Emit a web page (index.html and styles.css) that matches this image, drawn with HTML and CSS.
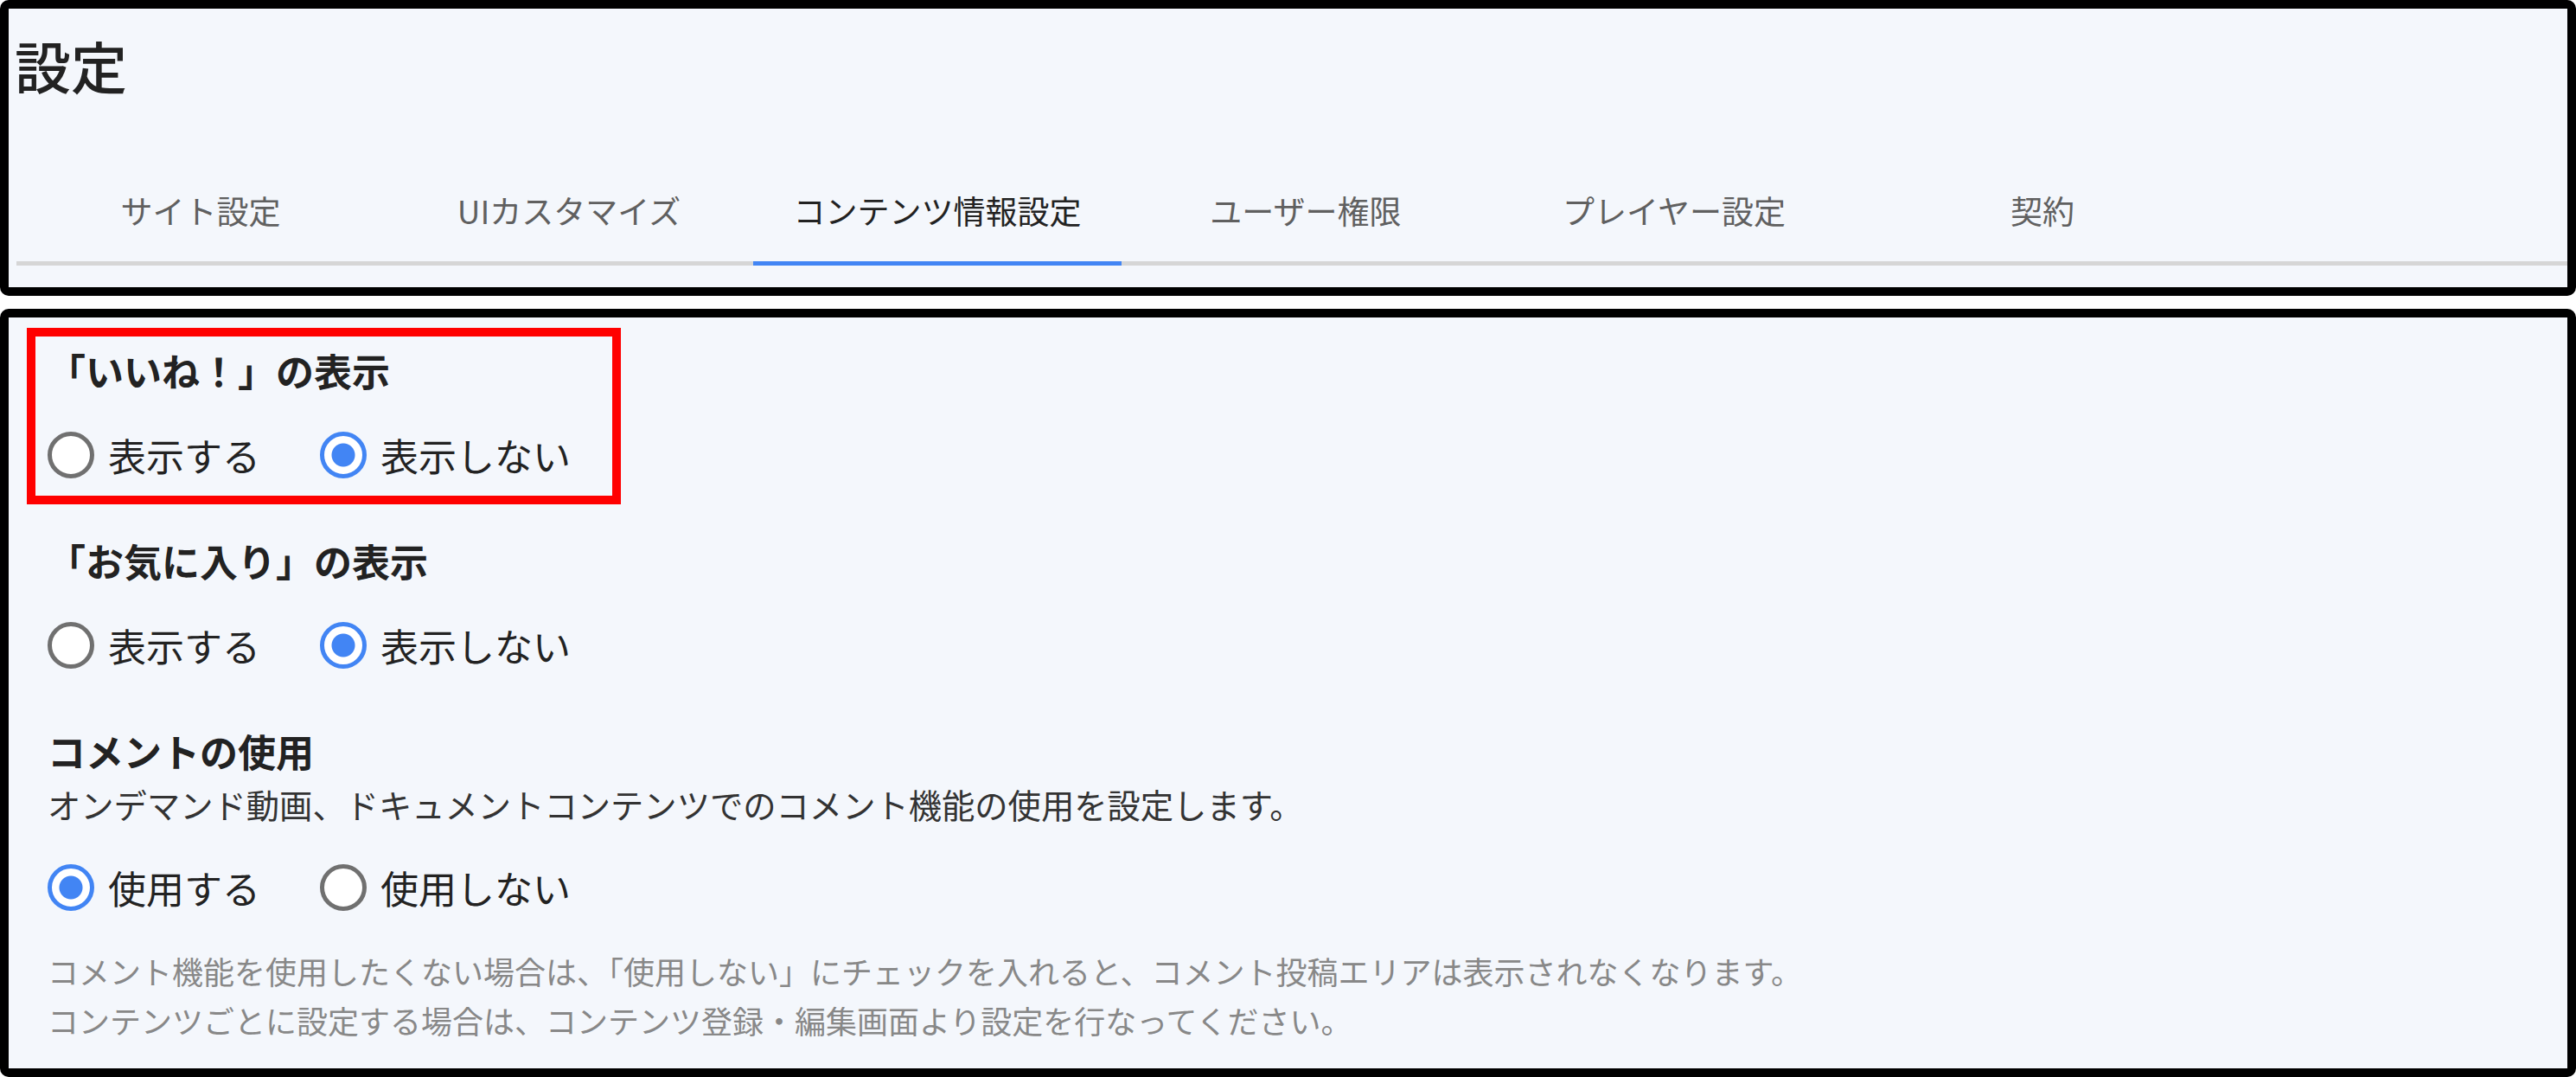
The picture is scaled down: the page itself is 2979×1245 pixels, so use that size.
FILE: index.html
```html
<!DOCTYPE html>
<html lang="ja">
<head>
    <meta charset="UTF-8">
    <meta name="viewport" content="width=device-width, initial-scale=1.0">
    <title>設定</title>
    <link rel="stylesheet" href="styles.css">
</head>
<body>
    <header class="panel page-head">
        <h1 class="page-title">設定</h1>
        <nav class="tabs">
            <a class="tab">サイト設定</a>
            <a class="tab">UIカスタマイズ</a>
            <a class="tab is-active">コンテンツ情報設定</a>
            <a class="tab">ユーザー権限</a>
            <a class="tab">プレイヤー設定</a>
            <a class="tab">契約</a>
        </nav>
    </header>

    <main class="panel settings">
        <!-- marked in red in the original capture -->
        <section class="setting is-marked">
            <h2 class="setting-title">「いいね！」の表示</h2>
            <div class="choices">
                <label class="choice"><input type="radio" name="like"> <span>表示する</span></label>
                <label class="choice"><input type="radio" name="like" checked> <span>表示しない</span></label>
            </div>
        </section>

        <section class="setting">
            <h2 class="setting-title">「お気に入り」の表示</h2>
            <div class="choices">
                <label class="choice"><input type="radio" name="favorite"> <span>表示する</span></label>
                <label class="choice"><input type="radio" name="favorite" checked> <span>表示しない</span></label>
            </div>
        </section>

        <section class="setting">
            <h2 class="setting-title">コメントの使用</h2>
            <p class="setting-desc">オンデマンド動画、ドキュメントコンテンツでのコメント機能の使用を設定します。</p>
            <div class="choices">
                <label class="choice"><input type="radio" name="comment" checked> <span>使用する</span></label>
                <label class="choice"><input type="radio" name="comment"> <span>使用しない</span></label>
            </div>
            <p class="setting-note first">コメント機能を使用したくない場合は、「使用しない」にチェックを入れると、コメント投稿エリアは表示されなくなります。</p>
            <p class="setting-note">コンテンツごとに設定する場合は、コンテンツ登録・編集画面より設定を行なってください。</p>
        </section>
    </main>
</body>
</html>
```

FILE: styles.css
```css
* {
    margin: 0;
    padding: 0;
    box-sizing: border-box;
    font-family: "Noto Sans CJK JP", "Noto Sans", sans-serif;
}

body {
    background: #fff;
    color: #222;
}

.panel {
    background: #f4f7fc;
    border: 10px solid #000;
    border-radius: 10px;
}

/* header: title + tabs */
.page-head {
    padding: 0 0 25px 9px;
}

.page-title {
    font-size: 65px;
    font-weight: 500;
    line-height: 94px;
    margin: 18px 0 0 -2px;
}

.tabs {
    display: flex;
    margin-top: 66px;
    border-bottom: 5px solid #d6d6d6;
}

.tab {
    width: 426px;
    padding-bottom: 4px;
    margin-bottom: -5px;
    border-bottom: 5px solid transparent;
    text-align: center;
    font-size: 37px;
    line-height: 110px;
    color: #606060;
    cursor: pointer;
}

.tab.is-active {
    color: #222;
    border-bottom-color: #4285f4;
}

/* settings list */
.settings {
    margin-top: 15px;
    padding: 12px 0 0 21px;
}

.setting {
    width: fit-content;
    border: 10px solid transparent;
    padding: 9px 48px 17px 14px;
}

.setting + .setting {
    margin-top: 16px;
}

.setting.is-marked {
    border-color: #ff0000;
}

.setting-title {
    font-size: 44px;
    font-weight: 700;
    line-height: 60px;
}

.setting-desc {
    margin-top: 4px;
    font-size: 38.3px;
    line-height: 56px;
    color: #333;
}

.choices {
    display: flex;
    gap: 69px;
    margin-top: 38px;
}

.choice {
    display: flex;
    align-items: center;
    gap: 16px;
    font-size: 44px;
    line-height: 60px;
    cursor: pointer;
}

.choice input {
    appearance: none;
    width: 54px;
    height: 54px;
    margin: 0;
    border: 5px solid #707070;
    border-radius: 50%;
    background: #fff;
}

.choice input:checked {
    border-color: #4285f4;
    background: radial-gradient(circle, #4285f4 0 13px, #fff 14px);
}

.setting-note {
    font-size: 36px;
    line-height: 57px;
    color: #888;
}

.setting-note.first {
    margin-top: 38px;
}
```
